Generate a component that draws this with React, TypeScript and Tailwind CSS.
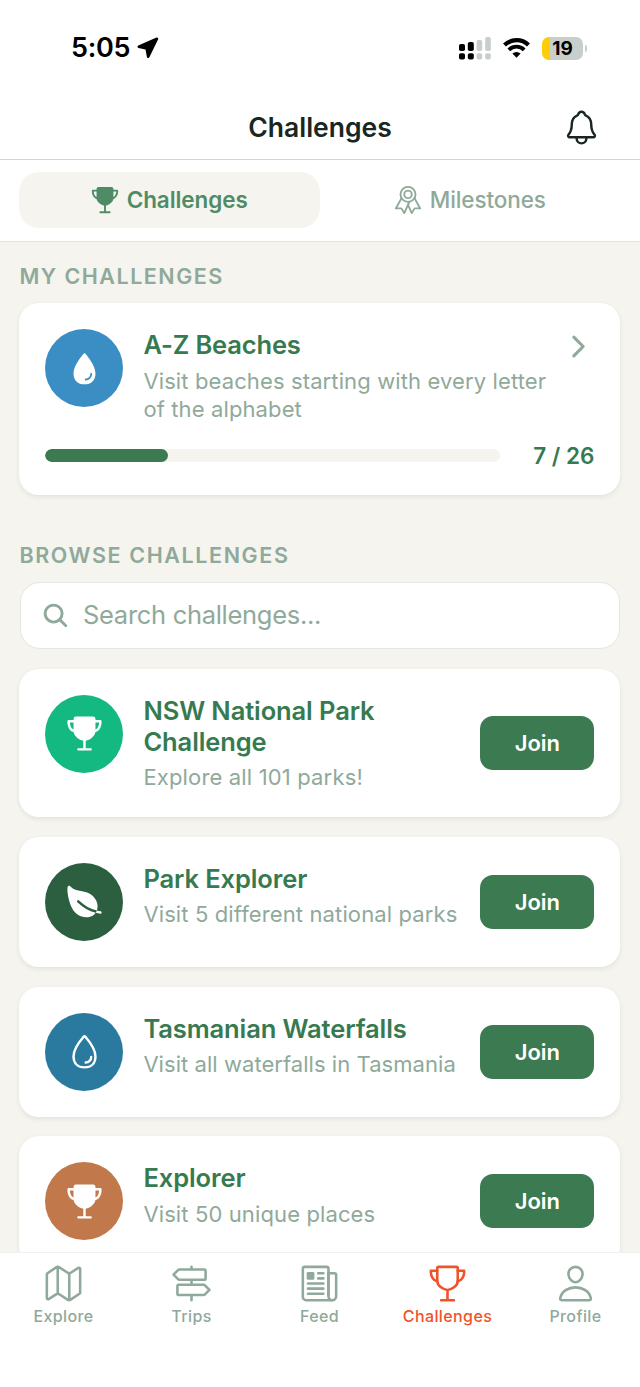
// App.tsx
import React from 'react';
import {
  IoChevronForward,
  IoLeaf,
  IoMapOutline,
  IoNewspaperOutline,
  IoNotificationsOutline,
  IoPersonOutline,
  IoRibbonOutline,
  IoSearch,
  IoTrailSignOutline,
  IoTrophy,
  IoTrophyOutline,
  IoWater,
  IoWaterOutline,
} from 'react-icons/io5';
import type { IconType } from 'react-icons';

interface Challenge {
  title: string;
  description: string;
  icon: IconType;
  color: string;
  descriptionClass: string;
}

const challenges: Challenge[] = [
  {
    title: 'NSW National Park Challenge',
    description: 'Explore all 101 parks!',
    icon: IoTrophy,
    color: 'bg-[#13b981]',
    descriptionClass: 'tracking-[0.16px]',
  },
  {
    title: 'Park Explorer',
    description: 'Visit 5 different national parks',
    icon: IoLeaf,
    color: 'bg-[#2b5f40]',
    descriptionClass: 'tracking-[0.12px]',
  },
  {
    title: 'Tasmanian Waterfalls',
    description: 'Visit all waterfalls in Tasmania',
    icon: IoWaterOutline,
    color: 'bg-[#2a7a9f]',
    descriptionClass: 'tracking-[0.05px]',
  },
  {
    title: 'Explorer',
    description: 'Visit 50 unique places',
    icon: IoTrophy,
    color: 'bg-[#c1794b]',
    descriptionClass: 'tracking-[0.12px]',
  },
];

const navItems = [
  { label: 'Explore', icon: IoMapOutline, active: false },
  { label: 'Trips', icon: IoTrailSignOutline, active: false },
  { label: 'Feed', icon: IoNewspaperOutline, active: false },
  { label: 'Challenges', icon: IoTrophyOutline, active: true },
  { label: 'Profile', icon: IoPersonOutline, active: false },
];

const StatusBar: React.FC = () => {
  return (
    <div className="flex h-24 items-center justify-between pl-[71px] pr-[53px] text-black">
      <div className="flex items-center gap-[7px]">
        <span className="text-[27px] font-semibold leading-8 tracking-[-0.3px]">5:05</span>
        <svg width="22" height="22" viewBox="0 0 22 22" fill="currentColor" stroke="currentColor">
          <path d="M20 1.8 1.8 9.8 9.6 11.4 11.2 19.8Z" strokeWidth="2.6" strokeLinejoin="round" />
        </svg>
      </div>
      <div className="flex items-center">
        <svg width="32" height="23" viewBox="0 0 32 23">
          <g fill="#000">
            <rect x="0" y="7" width="6" height="7" rx="1.8" />
            <rect x="0" y="16.2" width="6" height="6.3" rx="1.8" />
            <rect x="8.8" y="5" width="6" height="9" rx="1.8" />
            <rect x="8.8" y="16.2" width="6" height="6.3" rx="1.8" />
          </g>
          <g fill="#c8cfcb">
            <rect x="17.6" y="3" width="5.6" height="11" rx="1.8" />
            <rect x="17.6" y="16.2" width="5.6" height="6.3" rx="1.8" />
            <rect x="26.2" y="0" width="5.6" height="14" rx="1.8" />
            <rect x="26.2" y="16.2" width="5.6" height="6.3" rx="1.8" />
          </g>
        </svg>
        <svg className="ml-3" width="27" height="20" viewBox="0 0 27 20" fill="none" stroke="#000">
          <path d="M1.5 7.1a17.2 17.2 0 0 1 24 0" strokeWidth="4.2" />
          <path d="M5.8 11.8a11 11 0 0 1 15.4 0" strokeWidth="3.9" />
          <path d="M9.4 15.5a6 6 0 0 1 8.2 0L13.5 19.7Z" fill="#000" stroke="none" />
        </svg>
        <div className="ml-3 flex h-[23px] w-[41px] items-center justify-center overflow-hidden rounded-[7px] bg-linear-to-r from-[#ffcc0a] from-[8px] to-[#c8cfcb] to-[8px]">
          <span className="text-[19px] font-bold leading-[23px]">19</span>
        </div>
        <div className="ml-[2px] h-[7px] w-[2px] rounded-r-full bg-[#c8cfcb]" />
      </div>
    </div>
  );
};

const ChallengeIcon: React.FC<{ icon: IconType; color: string }> = ({ icon: Icon, color }) => {
  return (
    <div className={`flex size-[78px] shrink-0 items-center justify-center rounded-full ${color}`}>
      <Icon className="size-[39px] text-white" />
    </div>
  );
};

const App: React.FC = () => {
  return (
    <div className="flex h-[1387px] w-[640px] flex-col overflow-hidden bg-[#f5f4ef] font-['Inter',sans-serif]">
      <header className="shrink-0 bg-white">
        <StatusBar />
        <div className="flex h-16 items-center justify-between border-b border-[#d3d6d5] px-[39px]">
          <div className="size-[39px]" />
          <h1 className="text-[26.5px] font-semibold text-[#192622]">Challenges</h1>
          <IoNotificationsOutline className="size-[39px] text-[#192622]" />
        </div>
        <div className="flex h-[82px] items-center border-b border-[#e0e7e3] px-[19.4px] pb-[2px]">
          <div className="flex h-14 flex-1 items-center justify-center gap-[7px] rounded-[20px] bg-[#f5f4ef] pr-[2px] text-[#4f8c66]">
            <IoTrophy className="size-[30px]" />
            <span className="text-[22.5px] font-semibold tracking-[-0.08px]">Challenges</span>
          </div>
          <div className="flex h-14 flex-1 items-center justify-center gap-[7px] pr-[2px] text-[#8fa99a]">
            <IoRibbonOutline className="size-[30px]" />
            <span className="text-[22.5px] font-medium tracking-[-0.1px]">Milestones</span>
          </div>
        </div>
      </header>

      <main className="min-h-0 flex-1 overflow-hidden pt-5 pr-[19.6px] pl-[19.4px]">
        <h2 className="text-[21.5px] font-semibold leading-7 tracking-[1.5px] text-[#8fa99a]">MY CHALLENGES</h2>
        <div className="mt-[13px] rounded-[20px] bg-white p-[26px] shadow-[0_2px_5px_rgba(40,50,30,0.09)]">
          <div className="flex gap-5">
            <ChallengeIcon icon={IoWater} color="bg-[#3b8ec3]" />
            <div className="flex-1">
              <div className="flex justify-between">
                <h3 className="text-[25.5px] font-semibold leading-[31px] tracking-[-0.15px] text-[#367a50]">A-Z Beaches</h3>
                <IoChevronForward className="-mr-px -mb-2 mt-px size-[33px] text-[#8fa99a]" />
              </div>
              <p className="mt-[7px] whitespace-nowrap text-[22px] leading-7 tracking-[0.12px] text-[#8fa99a]">
                Visit beaches starting with every letter
                <br />
                of the alphabet
              </p>
            </div>
          </div>
          <div className="mt-[19px] flex h-[27px] items-center">
            <div className="h-[13px] w-[454.5px] overflow-hidden rounded-full bg-[#f5f4ef]">
              <div className="h-full rounded-full bg-[#3c7a51]" style={{ width: `${(7 / 26) * 100}%` }} />
            </div>
            <span className="flex-1 whitespace-nowrap text-right text-[22.5px] font-semibold text-[#367a50]">7 / 26</span>
          </div>
        </div>

        <h2 className="mt-[46px] text-[21.5px] font-semibold leading-7 tracking-[1.6px] text-[#8fa99a]">BROWSE CHALLENGES</h2>
        <div className="mx-[0.6px] mt-[13px] flex h-[67px] items-center gap-[13px] rounded-[20px] border-[1.5px] border-[#e2e8e3] bg-white px-5">
          <IoSearch className="size-[29px] text-[#8fa99a]" />
          <span className="text-[25.5px] tracking-[-0.3px] text-[#8fa99a]">Search challenges...</span>
        </div>

        <div className="mt-[19.7px] flex flex-col gap-[19.75px]">
          {challenges.map((item) => (
            <div
              key={item.title}
              className="flex rounded-[20px] bg-white p-[26px] shadow-[0_2px_5px_rgba(40,50,30,0.09)]"
            >
              <ChallengeIcon icon={item.icon} color={item.color} />
              <div className="ml-5 w-[317px] shrink-0">
                <h3 className="pr-10 text-[25.5px] font-semibold leading-[31px] tracking-[-0.1px] text-[#367a50]">{item.title}</h3>
                <p className={`mt-[6.5px] whitespace-nowrap text-[22px] leading-7 text-[#8fa99a] ${item.descriptionClass}`}>{item.description}</p>
              </div>
              <button className="ml-auto h-[54px] w-[114px] shrink-0 self-center rounded-[13px] bg-[#3c7a51] pt-px text-[22px] font-semibold text-white">
                Join
              </button>
            </div>
          ))}
        </div>
      </main>

      <nav className="flex h-[135px] shrink-0 border-t border-[#f0f1ee] bg-white pt-[10px]">
        {navItems.map(({ label, icon: Icon, active }) => (
          <div
            key={label}
            className={`flex w-32 flex-col items-center pr-px ${active ? 'text-[#f0522a]' : 'text-[#8fa99a]'}`}
          >
            <Icon className="size-[41px]" />
            <span className="text-[16px] font-medium leading-6 tracking-[0.4px]">{label}</span>
          </div>
        ))}
      </nav>
    </div>
  );
};

export default App;
